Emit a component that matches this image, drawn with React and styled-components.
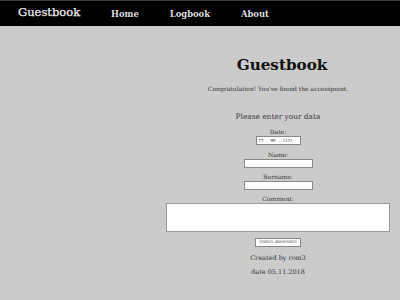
import React from 'react';
import styled, { createGlobalStyle } from 'styled-components';

const GlobalStyle = createGlobalStyle`
  html, body {
    margin: 0;
    padding: 0;
    background: #cbcbcb;
    font-family: "DejaVu Serif", serif;
    color: #333;
  }
`;

const NavBar = styled.nav`
  display: flex;
  align-items: center;
  height: 25px;
  background: #000;
  border-top: 1px solid #3a3a3a;
  padding-left: 18px;
`;

const Brand = styled.a`
  font-family: "DejaVu Serif", serif;
  font-size: 11.5px;
  color: #eee;
  -webkit-text-stroke: 0.25px #eee;
  margin-right: 31px;
  margin-top: -3px;
`;

const NavLink = styled.a`
  font-family: "DejaVu Serif", serif;
  font-size: 8.4px;
  font-weight: bold;
  color: #ddd;
  margin-right: 31px;
`;

const Page = styled.main`
  display: grid;
  grid-template-columns: 166px 224px;
`;

const Column = styled.section`
  grid-column: 2;
  display: flex;
  flex-direction: column;
  align-items: center;
  text-align: center;
  padding-top: 30px;
`;

const Title = styled.h1`
  margin: 0 0 0 8px;
  font-size: 15.2px;
  font-weight: bold;
  color: #111;
`;

const Intro = styled.p`
  margin: 11px 0 0;
  font-size: 6px;
  color: #333;
`;

const FormTitle = styled.h3`
  margin: 20px 0 0;
  font-size: 7.4px;
  font-weight: normal;
  color: #333;
`;

const Field = styled.label`
  display: flex;
  flex-direction: column;
  align-items: center;
  width: 100%;
  margin-top: ${p => p.$gap}px;
  font-size: 6px;
  color: #333;
`;

const Input = styled.input`
  box-sizing: border-box;
  width: ${p => p.$w}px;
  height: 9px;
  margin-top: 1px;
  padding: 0 2px;
  border: 1px solid #888;
  background: #fff;
  font-family: "DejaVu Sans Mono", monospace;
  font-size: 4px;
  color: #555;
  &::placeholder { color: #555; }
`;

const TextArea = styled.textarea`
  box-sizing: border-box;
  width: 100%;
  height: 29px;
  margin-top: 1px;
  border: 1px solid #999;
  background: #fff;
  resize: none;
`;

const Button = styled.button`
  margin-top: 6px;
  height: 9px;
  padding: 0 3px;
  border: 1px solid #888;
  background: #fff;
  font-family: "DejaVu Sans", sans-serif;
  font-size: 4.5px;
  color: #555;
  line-height: 1;
`;

const Footer = styled.p`
  margin: ${p => p.$gap}px 0 0;
  font-size: 6.5px;
  color: #333;
`;

export default function App() {
  return (
    <>
      <GlobalStyle />
      <NavBar>
        <Brand>Guestbook</Brand>
        <NavLink>Home</NavLink>
        <NavLink>Logbook</NavLink>
        <NavLink>About</NavLink>
      </NavBar>
      <Page>
        <Column>
          <Title>Guestbook</Title>
          <Intro>Congratulation! You've found the accesspoint.</Intro>
          <FormTitle>Please enter your data</FormTitle>
          <Field $gap={7}>
            Date:
            <Input $w={45} placeholder="TT . MM . JJJJ" />
          </Field>
          <Field $gap={6}>
            Name:
            <Input $w={69} />
          </Field>
          <Field $gap={5}>
            Surname:
            <Input $w={69} />
          </Field>
          <Field $gap={5}>
            Comment:
            <TextArea />
          </Field>
          <Button>Daten absenden</Button>
          <Footer $gap={7}>Created by rom3</Footer>
          <Footer $gap={6}>date 05.11.2018</Footer>
        </Column>
      </Page>
    </>
  );
}
